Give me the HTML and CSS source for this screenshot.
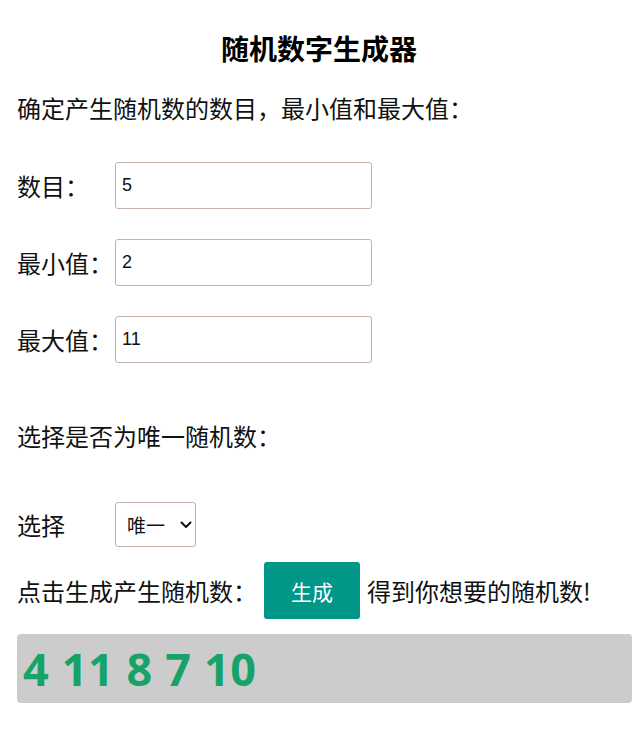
FILE: index.html
```html
<!DOCTYPE html>
<html lang="zh">
<head>
<meta charset="utf-8">
<title>随机数字生成器</title>
<link rel="stylesheet" href="styles.css">
</head>
<body>
<main class="page">
  <h1 class="title">随机数字生成器</h1>
  <p class="intro">确定产生随机数的数目，最小值和最大值：</p>
  <div class="fields">
    <div class="field"><label class="label" for="n">数目：</label><input class="input" id="n" type="text" value="5"></div>
    <div class="field"><label class="label" for="min">最小值：</label><input class="input" id="min" type="text" value="2"></div>
    <div class="field"><label class="label" for="max">最大值：</label><input class="input" id="max" type="text" value="11"></div>
  </div>
  <p class="question">选择是否为唯一随机数：</p>
  <div class="field select-row">
    <label class="label" for="uniq">选择</label>
    <div class="select-wrap">
      <select class="select" id="uniq"><option>唯一</option><option>不唯一</option></select>
      <svg class="chevron" width="12" height="8" viewBox="0 0 12 8" aria-hidden="true"><path d="M1.5 1.5 L6 6 L10.5 1.5" fill="none" stroke="#111" stroke-width="2" stroke-linecap="round" stroke-linejoin="round"/></svg>
    </div>
  </div>
  <div class="action-row">
    <span class="text">点击生成产生随机数：</span>
    <button class="btn" type="button">生成</button>
    <span class="text">得到你想要的随机数!</span>
  </div>
  <div class="result">4 11 8 7 10</div>
</main>
</body>
</html>
```
FILE: styles.css
```css
html, body {
  margin: 0;
  padding: 0;
  background: #fff;
}
body {
  font-family: "Noto Sans CJK SC", "Noto Sans", sans-serif;
  color: #111;
  font-size: 24px;
}
.page {
  display: flex;
  flex-direction: column;
  padding: 30px 6px 0 17px;
}
.title {
  margin: 0 -6px 0 -17px;
  font-size: 28px;
  line-height: 36px;
  font-weight: 700;
  text-align: center;
  color: #000;
}
.intro, .question {
  margin: 0;
  line-height: 32px;
}
.intro { margin-top: 26px; }
.fields {
  display: flex;
  flex-direction: column;
  gap: 30px;
  margin-top: 38px;
}
.field {
  display: flex;
  align-items: center;
  height: 47px;
}
.label {
  width: 98px;
  flex: none;
  line-height: 32px;
  white-space: nowrap;
}
.input {
  box-sizing: border-box;
  width: 257px;
  height: 47px;
  border: 1px solid #c4b1a8;
  border-radius: 3px;
  padding: 0 6px;
  font-family: "Liberation Sans", Arial, sans-serif;
  font-size: 18px;
  color: #111;
  outline: none;
}
.question { margin-top: 57px; }
.select-row {
  margin-top: 50px;
  height: 45px;
}
.select-wrap {
  position: relative;
  width: 81px;
  height: 45px;
}
.select {
  box-sizing: border-box;
  width: 81px;
  height: 45px;
  border: 1px solid #c4b1a8;
  border-radius: 3px;
  background: #fff;
  font-family: "Noto Sans CJK SC", sans-serif;
  font-size: 19px;
  color: #111;
  padding: 0 20px 0 11px;
  appearance: none;
  -webkit-appearance: none;
}
.chevron {
  position: absolute;
  left: 65px;
  top: 19px;
  pointer-events: none;
}
.action-row {
  display: flex;
  align-items: center;
  margin-top: 15px;
  height: 57px;
  white-space: nowrap;
}
.btn {
  box-sizing: border-box;
  width: 96px;
  height: 57px;
  margin: 0 7px 0 7px;
  border: none;
  border-radius: 3px;
  background: #009688;
  color: #fff;
  font-family: "Noto Sans CJK SC", sans-serif;
  font-size: 21px;
  flex: none;
}
.result {
  margin-top: 15px;
  height: 69px;
  box-sizing: border-box;
  background: #cccccc;
  border-radius: 4px;
  padding: 0 6px;
  display: flex;
  align-items: center;
  font-family: "Noto Sans", sans-serif;
  font-weight: 700;
  font-size: 45px;
  letter-spacing: 0.6px;
  color: #17a368;
}
```
